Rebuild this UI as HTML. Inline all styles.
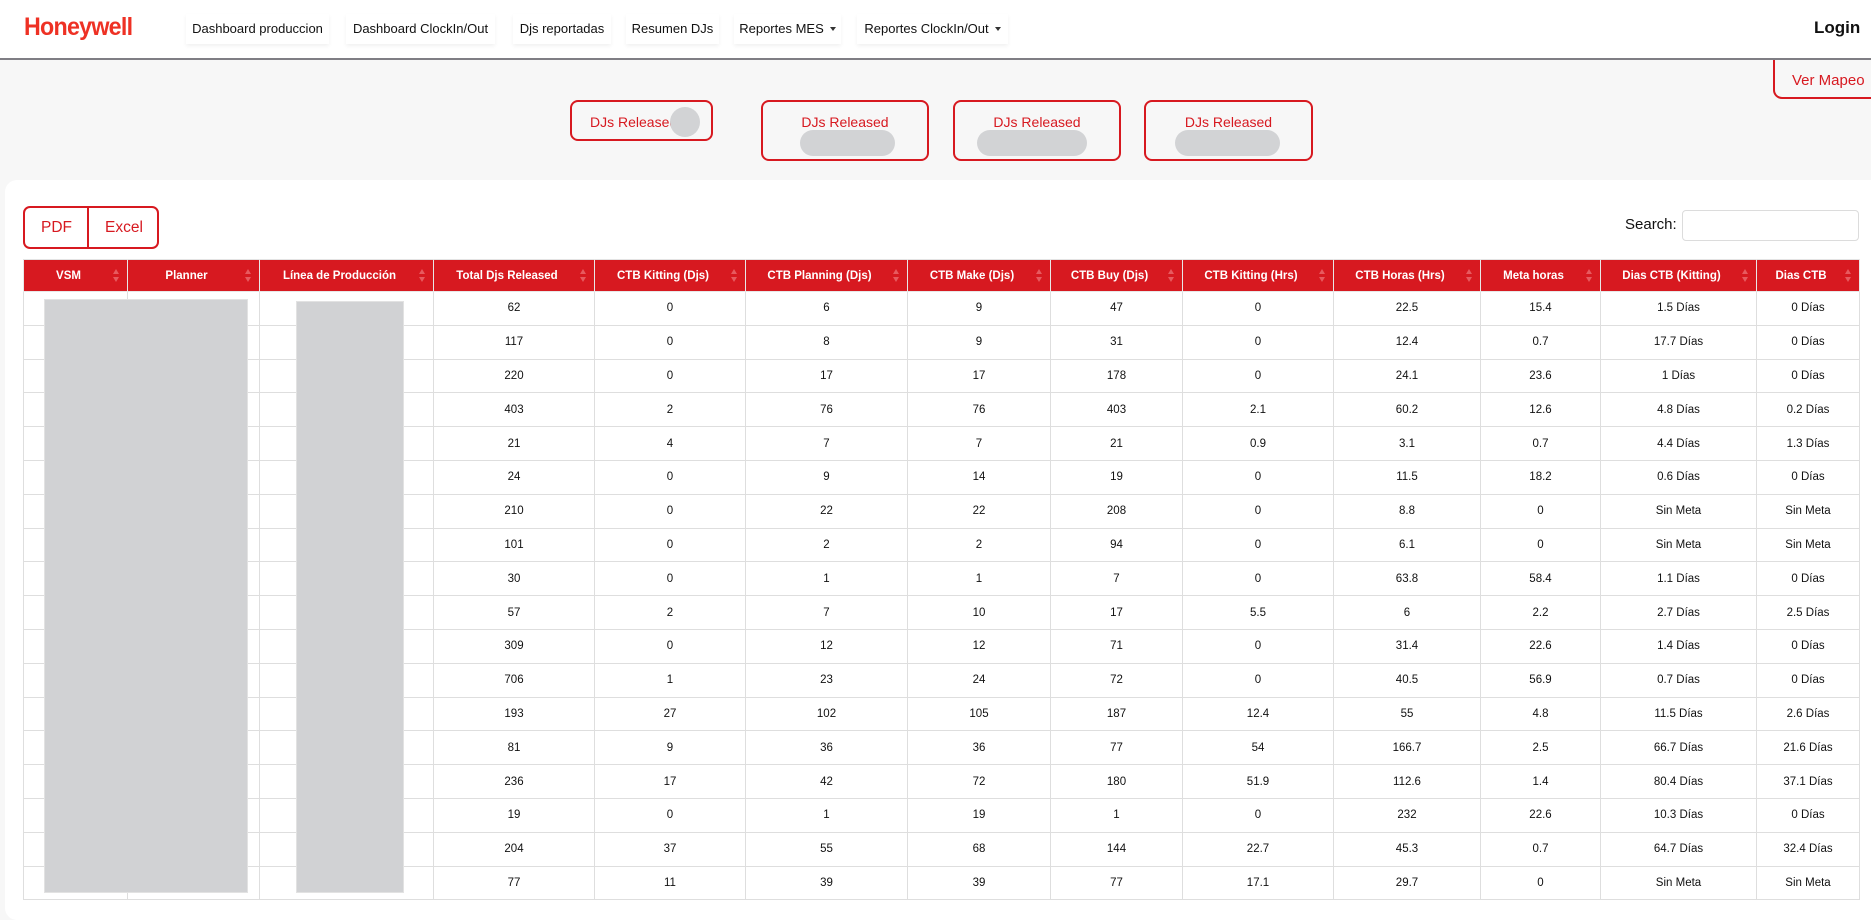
<!DOCTYPE html>
<html><head><meta charset="utf-8">
<style>
*{box-sizing:border-box;margin:0;padding:0}
body{width:1871px;height:899px;overflow:hidden;background:#f7f7f7;font-family:"Liberation Sans",sans-serif;position:relative;color:#212529}
.nav{position:absolute;left:0;top:0;width:1871px;height:60px;background:#fff;border-bottom:2px solid #7f7e84}
.logo{position:absolute;left:24px;top:13px;font-size:25px;font-weight:bold;color:#ee3124;letter-spacing:-0.8px;transform:scaleX(0.93);transform-origin:left}
.ni{position:absolute;top:14px;height:30px;line-height:30px;font-size:13px;color:#111;background:#fff;box-shadow:0 2px 4px rgba(0,0,0,0.06);text-align:center;white-space:nowrap}
.caret{display:inline-block;width:0;height:0;border-left:3px solid transparent;border-right:3px solid transparent;border-top:4px solid #333;margin-left:6px;vertical-align:2px}
.login{position:absolute;left:1814px;top:18px;font-size:17px;font-weight:bold;color:#111}
.card{position:absolute;border:2px solid #d71920;border-radius:8px;background:#f7f7f7;color:#d71920;font-size:14px;text-align:center}
.blob{position:absolute;background:#d2d3d5;border-radius:14px}
.mapeo{position:absolute;left:1773px;top:60px;width:110px;height:39px;border:2px solid #d71920;border-top:none;border-radius:0 0 9px 9px;color:#d71920;font-size:15px;padding:12px 0 0 17px}
.panel{position:absolute;left:5px;top:180px;width:1880px;height:740px;background:#fff;border-radius:12px}
.btns{position:absolute;left:23px;top:206px;width:136px;height:43px;border:2px solid #d71920;border-radius:7px;color:#d71920;font-size:15.5px}
.btns span{position:absolute;top:11px}
.search{position:absolute;left:1625px;top:216px;font-size:15px;color:#111}
.inp{position:absolute;left:1682px;top:210px;width:177px;height:31px;border:1px solid #dcdcdc;border-radius:4px}
table{position:absolute;left:23px;top:259px;border-collapse:collapse;table-layout:fixed;width:1836px}
th{background:#d71920;color:#fff;font-size:11.5px;font-weight:bold;height:32px;border:1px solid #e8e8e8;border-top:1px solid #e3e3e3;position:relative;text-align:center;padding-right:14px}
th:after{content:"";position:absolute;right:8px;top:9px;border-left:3px solid transparent;border-right:3px solid transparent;border-bottom:5px solid #e75a5f}
th:before{content:"";position:absolute;right:8px;top:17px;border-left:3px solid transparent;border-right:3px solid transparent;border-top:5px solid #e75a5f}
td{height:33.8px;border:1px solid #dedede;font-size:11.5px;text-align:center;color:#111}
.gray{position:absolute;background:#d1d2d4;border:1px solid #e2e2e2}
</style></head><body>
<div class="nav">
<div class="logo">Honeywell</div>
<div class="ni" style="left:186px;width:143px">Dashboard produccion</div>
<div class="ni" style="left:346px;width:149px">Dashboard ClockIn/Out</div>
<div class="ni" style="left:513px;width:98px">Djs reportadas</div>
<div class="ni" style="left:626px;width:93px">Resumen DJs</div>
<div class="ni" style="left:734px;width:107px">Reportes MES<span class="caret"></span></div>
<div class="ni" style="left:857px;width:151px">Reportes ClockIn/Out<span class="caret"></span></div>
<div class="login">Login</div>
</div>
<div class="mapeo">Ver Mapeo</div>
<div class="card" style="left:570px;top:100px;width:143px;height:41px;text-align:left;padding:12px 0 0 18px">DJs Released</div>
<div class="blob" style="left:670px;top:107px;width:30px;height:30px;border-radius:50%"></div>
<div class="card" style="left:761px;top:100px;width:168px;height:61px;padding-top:12px">DJs Released</div>
<div class="blob" style="left:800px;top:130px;width:95px;height:26px"></div>
<div class="card" style="left:953px;top:100px;width:168px;height:61px;padding-top:12px">DJs Released</div>
<div class="blob" style="left:977px;top:130px;width:110px;height:26px"></div>
<div class="card" style="left:1144px;top:100px;width:169px;height:61px;padding-top:12px">DJs Released</div>
<div class="blob" style="left:1175px;top:130px;width:105px;height:26px"></div>
<div class="panel"></div>
<div class="btns"><span style="left:16px">PDF</span><span style="left:62px;top:0;width:2px;height:39px;background:#d71920"></span><span style="left:80px">Excel</span></div>
<div class="search">Search:</div>
<div class="inp"></div>
<table>
<colgroup><col style="width:104px"><col style="width:132px"><col style="width:174px"><col style="width:161px"><col style="width:151px"><col style="width:162px"><col style="width:143px"><col style="width:132px"><col style="width:151px"><col style="width:147px"><col style="width:120px"><col style="width:156px"><col style="width:103px"></colgroup>
<tr><th>VSM</th><th>Planner</th><th>Línea de Producción</th><th>Total Djs Released</th><th>CTB Kitting (Djs)</th><th>CTB Planning (Djs)</th><th>CTB Make (Djs)</th><th>CTB Buy (Djs)</th><th>CTB Kitting (Hrs)</th><th>CTB Horas (Hrs)</th><th>Meta horas</th><th>Dias CTB (Kitting)</th><th>Dias CTB</th></tr>
<tr><td></td><td></td><td></td><td>62</td><td>0</td><td>6</td><td>9</td><td>47</td><td>0</td><td>22.5</td><td>15.4</td><td>1.5 Días</td><td>0 Días</td></tr>
<tr><td></td><td></td><td></td><td>117</td><td>0</td><td>8</td><td>9</td><td>31</td><td>0</td><td>12.4</td><td>0.7</td><td>17.7 Días</td><td>0 Días</td></tr>
<tr><td></td><td></td><td></td><td>220</td><td>0</td><td>17</td><td>17</td><td>178</td><td>0</td><td>24.1</td><td>23.6</td><td>1 Días</td><td>0 Días</td></tr>
<tr><td></td><td></td><td></td><td>403</td><td>2</td><td>76</td><td>76</td><td>403</td><td>2.1</td><td>60.2</td><td>12.6</td><td>4.8 Días</td><td>0.2 Días</td></tr>
<tr><td></td><td></td><td></td><td>21</td><td>4</td><td>7</td><td>7</td><td>21</td><td>0.9</td><td>3.1</td><td>0.7</td><td>4.4 Días</td><td>1.3 Días</td></tr>
<tr><td></td><td></td><td></td><td>24</td><td>0</td><td>9</td><td>14</td><td>19</td><td>0</td><td>11.5</td><td>18.2</td><td>0.6 Días</td><td>0 Días</td></tr>
<tr><td></td><td></td><td></td><td>210</td><td>0</td><td>22</td><td>22</td><td>208</td><td>0</td><td>8.8</td><td>0</td><td>Sin Meta</td><td>Sin Meta</td></tr>
<tr><td></td><td></td><td></td><td>101</td><td>0</td><td>2</td><td>2</td><td>94</td><td>0</td><td>6.1</td><td>0</td><td>Sin Meta</td><td>Sin Meta</td></tr>
<tr><td></td><td></td><td></td><td>30</td><td>0</td><td>1</td><td>1</td><td>7</td><td>0</td><td>63.8</td><td>58.4</td><td>1.1 Días</td><td>0 Días</td></tr>
<tr><td></td><td></td><td></td><td>57</td><td>2</td><td>7</td><td>10</td><td>17</td><td>5.5</td><td>6</td><td>2.2</td><td>2.7 Días</td><td>2.5 Días</td></tr>
<tr><td></td><td></td><td></td><td>309</td><td>0</td><td>12</td><td>12</td><td>71</td><td>0</td><td>31.4</td><td>22.6</td><td>1.4 Días</td><td>0 Días</td></tr>
<tr><td></td><td></td><td></td><td>706</td><td>1</td><td>23</td><td>24</td><td>72</td><td>0</td><td>40.5</td><td>56.9</td><td>0.7 Días</td><td>0 Días</td></tr>
<tr><td></td><td></td><td></td><td>193</td><td>27</td><td>102</td><td>105</td><td>187</td><td>12.4</td><td>55</td><td>4.8</td><td>11.5 Días</td><td>2.6 Días</td></tr>
<tr><td></td><td></td><td></td><td>81</td><td>9</td><td>36</td><td>36</td><td>77</td><td>54</td><td>166.7</td><td>2.5</td><td>66.7 Días</td><td>21.6 Días</td></tr>
<tr><td></td><td></td><td></td><td>236</td><td>17</td><td>42</td><td>72</td><td>180</td><td>51.9</td><td>112.6</td><td>1.4</td><td>80.4 Días</td><td>37.1 Días</td></tr>
<tr><td></td><td></td><td></td><td>19</td><td>0</td><td>1</td><td>19</td><td>1</td><td>0</td><td>232</td><td>22.6</td><td>10.3 Días</td><td>0 Días</td></tr>
<tr><td></td><td></td><td></td><td>204</td><td>37</td><td>55</td><td>68</td><td>144</td><td>22.7</td><td>45.3</td><td>0.7</td><td>64.7 Días</td><td>32.4 Días</td></tr>
<tr><td></td><td></td><td></td><td>77</td><td>11</td><td>39</td><td>39</td><td>77</td><td>17.1</td><td>29.7</td><td>0</td><td>Sin Meta</td><td>Sin Meta</td></tr>
</table>
<div class="gray" style="left:44px;top:299px;width:204px;height:594px"></div>
<div class="gray" style="left:296px;top:301px;width:108px;height:592px"></div>
</body></html>
